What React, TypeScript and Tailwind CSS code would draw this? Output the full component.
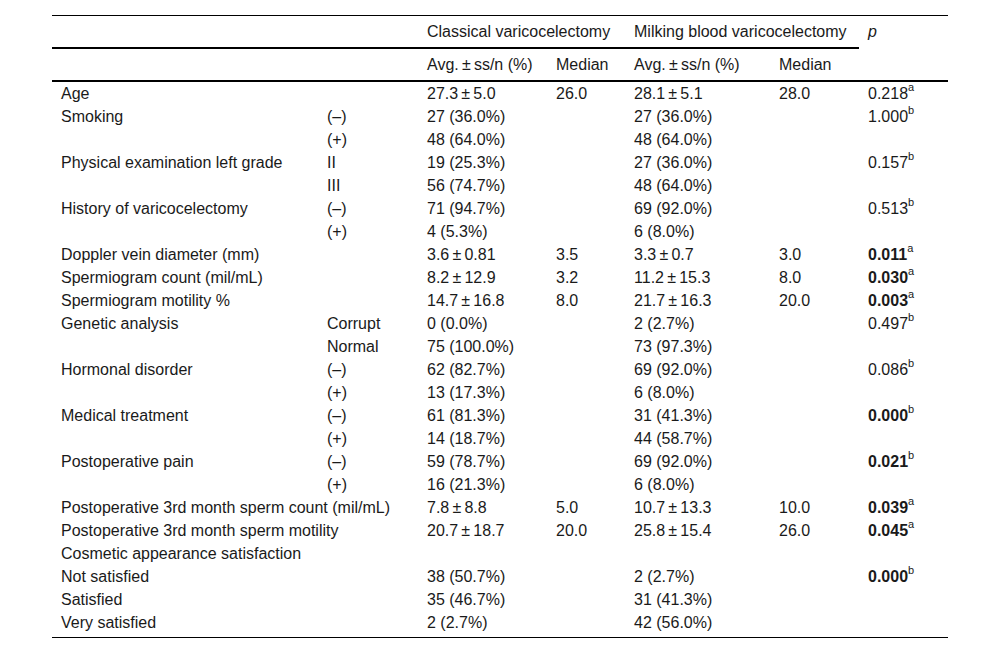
import React from "react";

type Row = {
  label: string;
  sub?: string;
  c1?: string;
  m1?: string;
  c2?: string;
  m2?: string;
  p?: string;
  sup?: string;
  bold?: boolean;
};

const pm = (a: string, b: string) => `${a}\u2009±\u2009${b}`;

const rows: Row[] = [
  { label: "Age", c1: pm("27.3", "5.0"), m1: "26.0", c2: pm("28.1", "5.1"), m2: "28.0", p: "0.218", sup: "a" },
  { label: "Smoking", sub: "(–)", c1: "27 (36.0%)", c2: "27 (36.0%)", p: "1.000", sup: "b" },
  { label: "", sub: "(+)", c1: "48 (64.0%)", c2: "48 (64.0%)" },
  { label: "Physical examination left grade", sub: "II", c1: "19 (25.3%)", c2: "27 (36.0%)", p: "0.157", sup: "b" },
  { label: "", sub: "III", c1: "56 (74.7%)", c2: "48 (64.0%)" },
  { label: "History of varicocelectomy", sub: "(–)", c1: "71 (94.7%)", c2: "69 (92.0%)", p: "0.513", sup: "b" },
  { label: "", sub: "(+)", c1: "4 (5.3%)", c2: "6 (8.0%)" },
  { label: "Doppler vein diameter (mm)", c1: pm("3.6", "0.81"), m1: "3.5", c2: pm("3.3", "0.7"), m2: "3.0", p: "0.011", sup: "a", bold: true },
  { label: "Spermiogram count (mil/mL)", c1: pm("8.2", "12.9"), m1: "3.2", c2: pm("11.2", "15.3"), m2: "8.0", p: "0.030", sup: "a", bold: true },
  { label: "Spermiogram motility %", c1: pm("14.7", "16.8"), m1: "8.0", c2: pm("21.7", "16.3"), m2: "20.0", p: "0.003", sup: "a", bold: true },
  { label: "Genetic analysis", sub: "Corrupt", c1: "0 (0.0%)", c2: "2 (2.7%)", p: "0.497", sup: "b" },
  { label: "", sub: "Normal", c1: "75 (100.0%)", c2: "73 (97.3%)" },
  { label: "Hormonal disorder", sub: "(–)", c1: "62 (82.7%)", c2: "69 (92.0%)", p: "0.086", sup: "b" },
  { label: "", sub: "(+)", c1: "13 (17.3%)", c2: "6 (8.0%)" },
  { label: "Medical treatment", sub: "(–)", c1: "61 (81.3%)", c2: "31 (41.3%)", p: "0.000", sup: "b", bold: true },
  { label: "", sub: "(+)", c1: "14 (18.7%)", c2: "44 (58.7%)" },
  { label: "Postoperative pain", sub: "(–)", c1: "59 (78.7%)", c2: "69 (92.0%)", p: "0.021", sup: "b", bold: true },
  { label: "", sub: "(+)", c1: "16 (21.3%)", c2: "6 (8.0%)" },
  { label: "Postoperative 3rd month sperm count (mil/mL)", c1: pm("7.8", "8.8"), m1: "5.0", c2: pm("10.7", "13.3"), m2: "10.0", p: "0.039", sup: "a", bold: true },
  { label: "Postoperative 3rd month sperm motility", c1: pm("20.7", "18.7"), m1: "20.0", c2: pm("25.8", "15.4"), m2: "26.0", p: "0.045", sup: "a", bold: true },
  { label: "Cosmetic appearance satisfaction" },
  { label: "Not satisfied", c1: "38 (50.7%)", c2: "2 (2.7%)", p: "0.000", sup: "b", bold: true },
  { label: "Satisfied", c1: "35 (46.7%)", c2: "31 (41.3%)" },
  { label: "Very satisfied", c1: "2 (2.7%)", c2: "42 (56.0%)" },
];

const td = "px-[9px] py-0 text-left align-top font-normal whitespace-nowrap";

export default function App() {
  return (
    <div className="w-[1000px] h-[655px] bg-white pt-[15px] text-[16px] text-[#1a1a1a] font-['Liberation_Sans',Arial,sans-serif]">
      <div className="mx-auto w-[896px] border-t border-black border-b pb-[3px]">
        <table className="w-full border-separate border-spacing-0 table-fixed">
          <colgroup>
            <col className="w-[266px]" />
            <col className="w-[100px]" />
            <col className="w-[129px]" />
            <col className="w-[78px]" />
            <col className="w-[145px]" />
            <col className="w-[89px]" />
            <col className="w-[89px]" />
          </colgroup>
          <thead>
            <tr className="leading-[31px]">
              <th colSpan={2} className={`${td} border-b-2 border-black`}></th>
              <th colSpan={2} className={`${td} border-b-2 border-black`}>
                Classical varicocelectomy
              </th>
              <th colSpan={2} className={`${td} border-b-2 border-black`}>
                Milking blood varicocelectomy
              </th>
              <th rowSpan={2} className={`${td} italic border-b-2 border-black`}>
                p
              </th>
            </tr>
            <tr className="leading-[31px]">
              <th colSpan={2} className={`${td} border-b-2 border-black`}></th>
              <th className={`${td} border-b-2 border-black`}>Avg.&thinsp;±&thinsp;ss/n (%)</th>
              <th className={`${td} border-b-2 border-black`}>Median</th>
              <th className={`${td} border-b-2 border-black`}>Avg.&thinsp;±&thinsp;ss/n (%)</th>
              <th className={`${td} border-b-2 border-black`}>Median</th>
            </tr>
          </thead>
          <tbody>
            {rows.map((r, i) => (
              <tr key={i} className="leading-[23px]">
                <td className={td}>{r.label}</td>
                <td className={td}>{r.sub}</td>
                <td className={td}>{r.c1}</td>
                <td className={td}>{r.m1}</td>
                <td className={td}>{r.c2}</td>
                <td className={td}>{r.m2}</td>
                <td className={td}>
                  {r.p && (
                    <>
                      <span className={r.bold ? "font-bold" : ""}>{r.p}</span>
                      <sup className="text-[11px] top-[-8px] font-normal">{r.sup}</sup>
                    </>
                  )}
                </td>
              </tr>
            ))}
          </tbody>
        </table>
      </div>
    </div>
  );
}
